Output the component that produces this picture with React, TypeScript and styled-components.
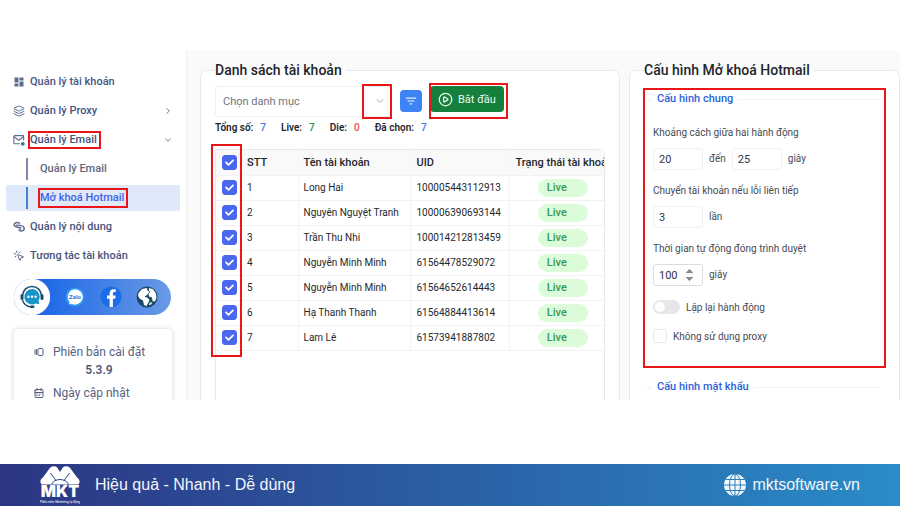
import React from "react";
import styled, { createGlobalStyle, css } from "styled-components";
import { ChevronDown, ChevronRight, CirclePlay, Layers, MousePointerClick } from "lucide-react";
import { MdDashboard, MdFilterList } from "react-icons/md";
import { TbCalendarMonth, TbVersions } from "react-icons/tb";

const RED = "#ea1518";

const GlobalStyle = createGlobalStyle`
  *, *::before, *::after { box-sizing: border-box; }
  body {
    margin: 0;
    background: #fff;
    color: #2b2f38;
    font-family: Roboto, "Liberation Sans", sans-serif;
    font-size: 10px;
  }
  button, input, select { font: inherit; color: inherit; }
`;

const Page = styled.div`
  display: flex;
  flex-direction: column;
  height: 100vh;
  padding-top: 51px;
`;

const Workspace = styled.div`
  display: grid;
  grid-template-columns: 186px minmax(0, 1fr);
  flex: 1;
  min-height: 0;
  margin-bottom: 64px;
  overflow: hidden;
`;

/* Sidebar */

const Sidebar = styled.aside`
  padding: 16px 6px 0;
`;

const Menu = styled.ul`
  margin: 0;
  padding: 0;
  list-style: none;
`;

const MenuLink = styled.a`
  display: flex;
  align-items: center;
  gap: 5px;
  height: 29px;
  padding: 0 7px;
  color: #46557d;
  font-size: 11px;
  font-weight: 500;
  line-height: 14px;
  text-decoration: none;

  > svg { flex: none; color: #5d6b8c; }
`;

const MenuText = styled.span<{ $marked?: boolean }>`
  ${(p) => p.$marked && css`
    padding-right: 2px;
    outline: 2px solid ${RED};
  `}
`;

const Arrow = styled.span`
  display: flex;
  margin-left: auto;
  color: #5a6272;
`;

const SubLink = styled.a<{ $active?: boolean }>`
  display: flex;
  align-items: center;
  gap: 12px;
  height: 29px;
  padding: 0 20px;
  border-radius: 3px;
  border-top: 2px solid #fff;
  border-bottom: 1px solid #fff;
  background: ${(p) => (p.$active ? "#dfe9fa" : "transparent")};
  color: ${(p) => (p.$active ? "#3f62e8" : "#5f6779")};
  font-size: 11px;
  font-weight: 500;
  line-height: 16px;
  text-decoration: none;

  &::before {
    content: "";
    width: 2px;
    height: 22px;
    background: ${(p) => (p.$active ? "#3f7fdc" : "#7d86ad")};
  }
`;

const SocialBar = styled.nav`
  display: flex;
  align-items: center;
  justify-content: space-between;
  height: 36px;
  margin: 9px 9px 0 8px;
  padding-right: 13px;
  border-radius: 18px;
  background: linear-gradient(90deg, #1f69e6 20%, #6b9ae6);
`;

const SocialLink = styled.a<{ $current?: boolean }>`
  display: flex;
  align-items: center;
  justify-content: center;
  width: ${(p) => (p.$current ? 36 : 22)}px;
  height: ${(p) => (p.$current ? 36 : 22)}px;
  border-radius: 50%;
  ${(p) => p.$current && css`
    background: #fff;
    box-shadow: 0 0 1px #c6d4ee;
  `}
`;

const VersionCard = styled.div`
  margin: 14px 8px 0;
  padding: 14px 19px;
  border-radius: 4px;
  box-shadow: 0 0 5px rgba(40, 50, 80, 0.22);
  color: #566181;
  font-size: 12px;
  line-height: 18px;
`;

const CardRow = styled.div`
  display: flex;
  align-items: center;
  gap: 8px;
`;

const VersionNumber = styled.div`
  margin-bottom: 5px;
  padding-left: 12px;
  color: #4e5878;
  font-weight: 600;
  text-align: center;
`;

/* Panels */

const Main = styled.main`
  display: grid;
  grid-template-columns: minmax(0, 420fr) minmax(0, 271fr);
  gap: 9px;
  padding: 10px 0 0 13px;
  border-left: 1px solid #efeff0;
  border-top: 1px solid #f7f7f8;
  background: #fafafa;
`;

const Panel = styled.fieldset`
  min-width: 0;
  margin: 0;
  padding: 6px 14px 0;
  border: 1px solid #e9e9eb;
  border-bottom: 0;
  border-radius: 6px 6px 0 0;
  background: #fff;
`;

const PanelTitle = styled.legend`
  padding: 0 4px 0 0;
  color: #22252b;
  font-size: 14px;
  font-weight: 500;
  line-height: 16px;
`;

const Toolbar = styled.div`
  display: flex;
  align-items: center;
  gap: 8px;
`;

const CategoryField = styled.div`
  position: relative;
  flex: none;
  width: 177px;
`;

const CategorySelect = styled.select`
  width: 100%;
  height: 31px;
  padding: 0 7px;
  border: 1px solid #f0f0f1;
  border-radius: 3px;
  appearance: none;
  background: #fff;
  color: #71757d;
  font-size: 11px;
`;

const CategoryMark = styled.span`
  position: absolute;
  inset: -2px 0 -2px auto;
  display: flex;
  align-items: center;
  justify-content: center;
  width: 30px;
  padding-left: 6px;
  border: 2px solid ${RED};
  color: #a6a9af;
  pointer-events: none;
`;

const FilterButton = styled.button`
  display: flex;
  align-items: center;
  justify-content: center;
  width: 22px;
  height: 22px;
  padding: 0;
  border: 0;
  border-radius: 4px;
  background: #3c83f6;
  color: #e4eeff;
`;

const StartMark = styled.span`
  padding: 2px 3px 6px 0;
  outline: 2px solid ${RED};
  outline-offset: -1px;
`;

const StartButton = styled.button`
  display: flex;
  align-items: center;
  gap: 5px;
  height: 26px;
  padding: 0 8px;
  border: 0;
  border-radius: 4px;
  background: #15803c;
  color: #eefaf1;
  font-size: 11px;
`;

const Stats = styled.dl`
  display: flex;
  gap: 15px;
  margin: 3px 0 14px;
  line-height: 14px;

  div { display: flex; gap: 7px; }
  dt { font-weight: 600; color: #24272d; }
`;

const StatValue = styled.dd<{ $tone: string }>`
  margin: 0;
  color: ${(p) => p.$tone};
  font-weight: 500;
`;

const TableArea = styled.div`
  position: relative;
  height: 100%;
`;

const TableFrame = styled.div`
  height: 100%;
  overflow: hidden;
  border: 1px solid #e9e9eb;
  border-radius: 3px 6px 0 0;
`;

const SelectionMark = styled.span`
  position: absolute;
  top: -5px;
  left: -4px;
  width: 31px;
  height: 213px;
  border: 2px solid ${RED};
  pointer-events: none;
`;

const Table = styled.table`
  width: calc(100% + 12px);
  border-collapse: collapse;
  table-layout: fixed;

  col:nth-child(1) { width: 27px; }
  col:nth-child(2) { width: 55px; }
  col:nth-child(3) { width: 112px; }
  col:nth-child(4) { width: 99px; }
`;

const cell = css`
  height: 25px;
  padding: 0 5px;
  border-right: 1px solid #f4f4f5;
  border-bottom: 1px solid #f2f2f3;
  text-align: left;
  white-space: nowrap;

  &:first-child { padding: 0 0 0 5px; border-right: 0; }
  &:nth-child(2) { padding-left: 4px; }
  &:nth-child(n + 4) { padding-left: 6px; }
`;

const HeadCell = styled.th`
  ${cell}
  background: #f9f9fa;
  color: #24272d;
  font-size: 11px;
  font-weight: 500;
`;

const Cell = styled.td`
  ${cell}
  color: #26282c;
`;

const RowCheck = styled.input`
  display: block;
  width: 15px;
  height: 15px;
  margin: 0 0 0 1px;
  appearance: none;
  border: 1px solid #c6c9d2;
  border-radius: 3px;
  background: #fff;

  &:checked {
    border-color: #4a68ee;
    background: #4a68ee url("data:image/svg+xml,%3Csvg xmlns='http://www.w3.org/2000/svg' viewBox='0 0 13 13'%3E%3Cpath d='M3 6.4l2.5 2.4L10 4.4' fill='none' stroke='white' stroke-width='1.7' stroke-linecap='round' stroke-linejoin='round'/%3E%3C/svg%3E") center / 100%;
  }
`;

const StatusPill = styled.span`
  display: block;
  width: 50px;
  height: 18px;
  margin: 0 auto;
  padding-left: 9px;
  border-radius: 9px;
  background: #dcfbd9;
  color: #37995a;
  font-size: 11px;
  font-weight: 500;
  line-height: 18px;
`;

/* Configuration */

const ConfigPanel = styled(Panel)`
  padding-top: 10px;
  padding-right: 13px;
`;

const GroupMark = styled.div<{ $marked?: boolean }>`
  margin: 0 0 8px -1px;
  padding: 2px 4px 9px 2px;
  border: 2px solid ${(p) => (p.$marked ? RED : "transparent")};
`;

const Group = styled.fieldset`
  min-width: 0;
  margin: 0;
  padding: 19px 6px 0;
  border: 0;
  border-top: 1px solid #f2f2f3;
`;

const GroupTitle = styled.legend`
  margin-left: -1px;
  padding: 0 5px;
  color: #2c63dc;
  font-size: 11px;
  font-weight: 500;
  line-height: 14px;
`;

const Field = styled.div`
  display: flex;
  flex-direction: column;
  gap: 7px;
  margin-bottom: 13px;
  color: #474b54;
  line-height: 16px;
`;

const Inline = styled.div`
  display: flex;
  align-items: center;
  gap: 6px;
`;

const NumberInput = styled.input<{ $spinner?: boolean }>`
  width: 50px;
  height: 22px;
  padding: 0 5px;
  border: 1px solid ${(p) => (p.$spinner ? "#dcdde0" : "#f0f0f1")};
  border-radius: 3px;
  outline: 0;
  background: #fff;
  color: #33363d;
  font-size: 11px;

  &::-webkit-inner-spin-button { opacity: ${(p) => (p.$spinner ? 1 : 0)}; }
`;

const OptionLabel = styled.label`
  display: flex;
  align-items: center;
  gap: 6px;
  height: 16px;
  margin-bottom: 13px;
  color: #474b54;
`;

const Switch = styled.input`
  display: flex;
  align-items: center;
  width: 27px;
  height: 14px;
  margin: 0;
  padding: 0 2px;
  appearance: none;
  border-radius: 7px;
  background: #e6e7ea;

  &::before {
    content: "";
    width: 10px;
    height: 10px;
    border-radius: 50%;
    background: #fff;
  }

  &:checked { justify-content: flex-end; background: #3c83f6; }
`;

const OptionCheck = styled(RowCheck)`
  width: 14px;
  height: 14px;
  margin: 0;
  border-color: #e8e8ea;
`;

/* Footer */

const Footer = styled.footer`
  display: flex;
  align-items: center;
  flex: none;
  gap: 15px;
  height: 42px;
  padding: 0 40px;
  background: linear-gradient(90deg, #2c3583, #2b5fa4 50%, #2a8cc8);
  color: #f2f6fc;
  font-family: "Liberation Sans", Arial, sans-serif;
  font-size: 16px;
  line-height: 20px;
`;

const SiteLink = styled.a`
  display: flex;
  align-items: center;
  gap: 6px;
  margin-left: auto;
  color: inherit;
  text-decoration: none;
`;

/* Drawings */

const MailIcon = () => (
  <svg width="12" height="12" viewBox="0 0 22 22" fill="none" stroke="currentColor" strokeWidth="2" strokeLinecap="round" strokeLinejoin="round" aria-hidden="true">
    <path d="M12 18H3a1.500 1.500 0 0 1-1.500-1.500V4.500A1.500 1.500 0 0 1 3 3h15a1.500 1.500 0 0 1 1.500 1.500V11" />
    <path d="M2 5l8.500 6.500L19 5" />
    <circle cx="18" cy="18" r="2.500" fill="#2f8f80" stroke="#2f7f80" />
  </svg>
);

const ContentIcon = () => (
  <svg width="12" height="12" viewBox="0 0 22 22" fill="none" stroke="currentColor" strokeLinecap="round" strokeLinejoin="round" aria-hidden="true">
    <path d="M12 4C7 1.500 2 3.500 2 7s3.500 4 7 4.500l5 .5" strokeWidth="2.600" />
    <path d="M6 7.500l7 .5c5 .5 8 3 7.500 6.500" strokeWidth="2.600" />
    <path d="M20.500 14c0 4-5 6-9.500 3" strokeWidth="2.600" />
    <path d="M11 14.500l4 .5" strokeWidth="2" />
  </svg>
);

const SupportIcon = () => (
  <svg width="26" height="24" viewBox="0 0 26 24" fill="none" aria-hidden="true">
    <path d="M3.500 10.500C4 5 8 1.500 13 1.500S22 5 22.500 10.500" stroke="#1d4d6e" strokeWidth="1.600" />
    <rect x="1.500" y="9" width="3" height="6" rx="1.500" fill="#1d4d6e" />
    <rect x="21.500" y="9" width="3" height="6" rx="1.500" fill="#1d4d6e" />
    <path d="M3.500 15c1 4 4.500 6.500 8.500 6.800" stroke="#1d4d6e" strokeWidth="1.300" />
    <rect x="11" y="20.500" width="4.500" height="2.500" rx="1.200" fill="#1d4d6e" />
    <path d="M13 4a7.700 7.700 0 1 0 3.800 14.400l3.600.9-.9-3.600A7.700 7.700 0 0 0 13 4z" fill="#1795c8" />
    <circle cx="9.400" cy="11.700" r="1.200" fill="#fff" />
    <circle cx="13" cy="11.700" r="1.200" fill="#fff" />
    <circle cx="16.600" cy="11.700" r="1.200" fill="#fff" />
  </svg>
);

const ZaloIcon = () => (
  <svg width="20" height="20" viewBox="0 0 20 20" aria-hidden="true">
    <circle cx="10" cy="10" r="9.500" fill="#2f9cf5" />
    <path d="M10 2.200a7.700 7.700 0 1 1-3.400 14.600l-2.600.6.800-2.400A7.700 7.700 0 0 1 10 2.200z" fill="#fff" />
    <text x="10" y="12" textAnchor="middle" fontFamily="Roboto, sans-serif" fontSize="6" fontWeight="700" fill="#1f7fe0">Zalo</text>
  </svg>
);

const FacebookIcon = () => (
  <svg width="22" height="22" viewBox="0 0 22 22" aria-hidden="true">
    <circle cx="11" cy="11" r="10.500" fill="#1a6ce8" />
    <path d="M9.600 21v-8.300H7V9.600h2.600V7.400c0-2.700 1.600-4.100 4-4.100 1.100 0 2.200.2 2.200.2v2.600h-1.300c-1.200 0-1.600.8-1.600 1.500v2h2.800l-.5 3.100h-2.300V21z" fill="#fff" />
  </svg>
);

const EarthIcon = () => (
  <svg width="22" height="22" viewBox="0 0 22 22" aria-hidden="true">
    <circle cx="11" cy="11" r="10.500" fill="#1c4a66" />
    <path d="M2.500 7L6 3l5-1 .5 2.500 2 1-2.500 3.500-2.500 1.500 3.500 1.500 1.500 2.500-3 5.500-2.500-1-1-4.500-3.500-2L2 9.500z" fill="#fff" />
    <path d="M13 2l4 1.200 2.800 4 .7 4.300-1.500 4-2.500-.5-.5-3.500-3-1-.5-3 2-1.500-1.500-1.500z" fill="#fff" />
    <path d="M13.500 17l3-1-1.500 2.500-2 .8z" fill="#fff" />
  </svg>
);

const BrandLogo = () => (
  <svg width="40" height="38" viewBox="0 0 40 38" role="img" aria-label="MKT">
    <path d="M1.500 18.500C-.5 16 .5 13 2.500 12L9.500 2.500C11.500-.3 16-.3 17.500 2L20 6 22.500 2C24-.3 28.500-.3 30.500 2.500L37.500 12c2 1 3 4 1 6.500z" fill="#fff" />
    <path d="M10.500 7l5.500 7.500M29.500 7L24 14.500M11.500 18.500C12.500 15.500 16 13.500 20 13.500s7.500 2 8.500 5" fill="none" stroke="#2f4489" strokeWidth="1" />
    <text x="20" y="31" textAnchor="middle" fontFamily="Inter, sans-serif" fontSize="16" fontWeight="900" fill="#fff">MKT</text>
    <text x="20" y="37" textAnchor="middle" fontFamily="Roboto, sans-serif" fontSize="3" fontWeight="500" fill="#dfe6f5">Phần mềm Marketing tự động</text>
  </svg>
);

const WebIcon = () => (
  <svg width="22" height="22" viewBox="0 0 22 22" aria-hidden="true">
    <circle cx="11" cy="11" r="11" fill="#f2f8fd" />
    <g fill="none" stroke="#2b7dba" strokeWidth="1">
      <ellipse cx="11" cy="11" rx="5.500" ry="11" />
      <path d="M11 0v22M0 11h22M1.500 5.500h19M1.500 16.500h19" />
    </g>
  </svg>
);

const accounts = [
  ["Long Hai", "100005443112913"],
  ["Nguyên Nguyệt Tranh", "100006390693144"],
  ["Trần Thu Nhi", "100014212813459"],
  ["Nguyễn Minh Minh", "61564478529072"],
  ["Nguyễn Minh Minh", "61564652614443"],
  ["Hạ Thanh Thanh", "61564884413614"],
  ["Lam Lê", "61573941887802"],
];

const stats = [
  { label: "Tổng số:", value: 7, tone: "#3b7be8" },
  { label: "Live:", value: 7, tone: "#1f9450" },
  { label: "Die:", value: 0, tone: "#ec4550" },
  { label: "Đã chọn:", value: 7, tone: "#3b7be8" },
];

export default function App() {
  return (
    <Page>
      <GlobalStyle />
      <Workspace>
        <Sidebar>
          <Menu>
            <li><MenuLink href="#accounts"><MdDashboard size={12} /><MenuText>Quản lý tài khoản</MenuText></MenuLink></li>
            <li>
              <MenuLink href="#proxy">
                <Layers size={12} /><MenuText>Quản lý Proxy</MenuText>
                <Arrow><ChevronRight size={10} /></Arrow>
              </MenuLink>
            </li>
            <li>
              <MenuLink href="#email">
                <MailIcon /><MenuText $marked>Quản lý Email</MenuText>
                <Arrow><ChevronDown size={10} /></Arrow>
              </MenuLink>
              <Menu>
                <li><SubLink href="#email-list">Quản lý Email</SubLink></li>
                <li><SubLink href="#hotmail" $active><MenuText $marked>Mở khoá Hotmail</MenuText></SubLink></li>
              </Menu>
            </li>
            <li><MenuLink href="#content"><ContentIcon /><MenuText>Quản lý nội dung</MenuText></MenuLink></li>
            <li><MenuLink href="#interact"><MousePointerClick size={12} /><MenuText>Tương tác tài khoản</MenuText></MenuLink></li>
          </Menu>
          <SocialBar aria-label="Liên hệ">
            <SocialLink href="#support" aria-label="Hỗ trợ" $current><SupportIcon /></SocialLink>
            <SocialLink href="#zalo" aria-label="Zalo"><ZaloIcon /></SocialLink>
            <SocialLink href="#facebook" aria-label="Facebook"><FacebookIcon /></SocialLink>
            <SocialLink href="#website" aria-label="Website"><EarthIcon /></SocialLink>
          </SocialBar>
          <VersionCard>
            <CardRow><TbVersions size={12} />Phiên bản cài đặt</CardRow>
            <VersionNumber>5.3.9</VersionNumber>
            <CardRow><TbCalendarMonth size={12} />Ngày cập nhật</CardRow>
          </VersionCard>
        </Sidebar>

        <Main>
          <Panel>
            <PanelTitle>Danh sách tài khoản</PanelTitle>
            <Toolbar>
              <CategoryField>
                <CategorySelect aria-label="Danh mục" defaultValue="">
                  <option value="">Chọn danh mục</option>
                </CategorySelect>
                <CategoryMark><ChevronDown size={12} /></CategoryMark>
              </CategoryField>
              <FilterButton aria-label="Lọc"><MdFilterList size={14} /></FilterButton>
              <StartMark>
                <StartButton><CirclePlay size={15} />Bắt đầu</StartButton>
              </StartMark>
            </Toolbar>
            <Stats>
              {stats.map((s) => (
                <div key={s.label}>
                  <dt>{s.label}</dt>
                  <StatValue $tone={s.tone}>{s.value}</StatValue>
                </div>
              ))}
            </Stats>
            <TableArea>
              <TableFrame>
                <Table>
                  <colgroup><col /><col /><col /><col /><col /></colgroup>
                  <thead>
                    <tr>
                      <HeadCell><RowCheck type="checkbox" defaultChecked aria-label="Chọn tất cả" /></HeadCell>
                      <HeadCell>STT</HeadCell>
                      <HeadCell>Tên tài khoản</HeadCell>
                      <HeadCell>UID</HeadCell>
                      <HeadCell>Trạng thái tài khoản</HeadCell>
                    </tr>
                  </thead>
                  <tbody>
                    {accounts.map(([name, uid], i) => (
                      <tr key={uid}>
                        <Cell><RowCheck type="checkbox" defaultChecked aria-label={`Chọn ${name}`} /></Cell>
                        <Cell>{i + 1}</Cell>
                        <Cell>{name}</Cell>
                        <Cell>{uid}</Cell>
                        <Cell><StatusPill>Live</StatusPill></Cell>
                      </tr>
                    ))}
                  </tbody>
                </Table>
              </TableFrame>
              <SelectionMark />
            </TableArea>
          </Panel>

          <ConfigPanel>
            <PanelTitle>Cấu hình Mở khoá Hotmail</PanelTitle>
            <GroupMark $marked>
              <Group>
                <GroupTitle>Cấu hình chung</GroupTitle>
                <Field>
                  <label htmlFor="delay-from">Khoảng cách giữa hai hành động</label>
                  <Inline>
                    <NumberInput id="delay-from" type="number" defaultValue={20} />
                    <label htmlFor="delay-to">đến</label>
                    <NumberInput id="delay-to" type="number" defaultValue={25} />
                    <span>giây</span>
                  </Inline>
                </Field>
                <Field>
                  <label htmlFor="fail-limit">Chuyển tài khoản nếu lỗi liên tiếp</label>
                  <Inline><NumberInput id="fail-limit" type="number" defaultValue={3} /><span>lần</span></Inline>
                </Field>
                <Field>
                  <label htmlFor="close-after">Thời gian tự động đóng trình duyệt</label>
                  <Inline><NumberInput id="close-after" type="number" defaultValue={100} $spinner /><span>giây</span></Inline>
                </Field>
                <OptionLabel><Switch type="checkbox" role="switch" />Lặp lại hành động</OptionLabel>
                <OptionLabel><OptionCheck type="checkbox" />Không sử dụng proxy</OptionLabel>
              </Group>
            </GroupMark>
            <GroupMark>
              <Group>
                <GroupTitle>Cấu hình mật khẩu</GroupTitle>
              </Group>
            </GroupMark>
          </ConfigPanel>
        </Main>
      </Workspace>

      <Footer>
        <BrandLogo />
        <span>Hiệu quả - Nhanh - Dễ dùng</span>
        <SiteLink href="#site"><WebIcon />mktsoftware.vn</SiteLink>
      </Footer>
    </Page>
  );
}
